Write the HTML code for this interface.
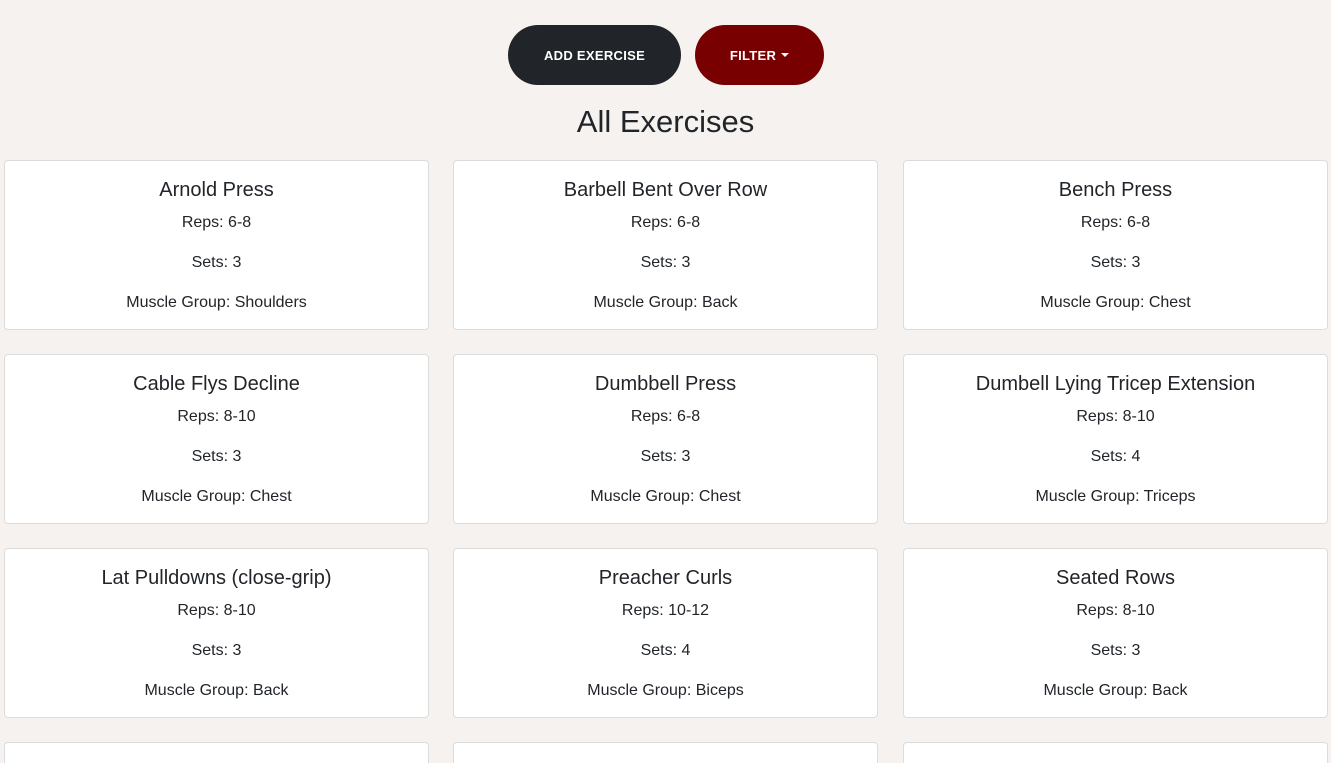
<!DOCTYPE html>
<html style="height:763px;overflow:hidden"><head><style>
body{margin:0;background:#f5f2ef;font-family:"Liberation Sans",sans-serif;color:#212529;width:1331px;height:763px;overflow:hidden;position:relative}
.btn{position:absolute;top:25px;height:60px;border-radius:30px;color:#fff;font-weight:bold;font-size:13px;letter-spacing:.3px;display:flex;align-items:center;justify-content:center}
.add{left:508px;width:173px;background:#212529}
.filt{left:695px;width:129px;background:#780000}
.caret{display:inline-block;margin-left:5px;border-left:4px solid transparent;border-right:4px solid transparent;border-top:4px solid #fff;vertical-align:middle}
h1{position:absolute;top:103px;left:0;width:1331px;margin:0;text-align:center;font-weight:normal;font-size:31px;line-height:38px}
.card{position:absolute;width:423px;height:168px;background:#fff;border:1px solid #dcdcdc;border-radius:4px;text-align:center}
.card.last{height:30px;border-bottom:none;border-radius:4px 4px 0 0}
.card .t{position:absolute;top:17px;width:100%;font-size:20px;line-height:24px}
.card .l{position:absolute;width:100%;font-size:16px;line-height:20px}
</style></head><body>
<div class="btn add">ADD EXERCISE</div>
<div class="btn filt">FILTER<span class="caret"></span></div>
<h1>All Exercises</h1>
<div id="g"></div>
<script>
var d=[["Arnold Press","6-8",3,"Shoulders"],["Barbell Bent Over Row","6-8",3,"Back"],["Bench Press","6-8",3,"Chest"],["Cable Flys Decline","8-10",3,"Chest"],["Dumbbell Press","6-8",3,"Chest"],["Dumbell Lying Tricep Extension","8-10",4,"Triceps"],["Lat Pulldowns (close-grip)","8-10",3,"Back"],["Preacher Curls","10-12",4,"Biceps"],["Seated Rows","8-10",3,"Back"],["","","",""],["","","",""],["","","",""]];
var xs=[4,453,903],h="";
d.forEach(function(e,i){var x=xs[i%3],y=160+194*Math.floor(i/3);
h+='<div class="card'+(e[0]?'':' last')+'" style="left:'+x+'px;top:'+y+'px'+(e[0]?'':';height:20px')+'">'+(e[0]?'<div class="t">'+e[0]+'</div><div class="l" style="top:52px">Reps: '+e[1]+'</div><div class="l" style="top:92px">Sets: '+e[2]+'</div><div class="l" style="top:132px">Muscle Group: '+e[3]+'</div>':'')+'</div>';});
document.getElementById('g').innerHTML=h;
</script>
</body></html>
